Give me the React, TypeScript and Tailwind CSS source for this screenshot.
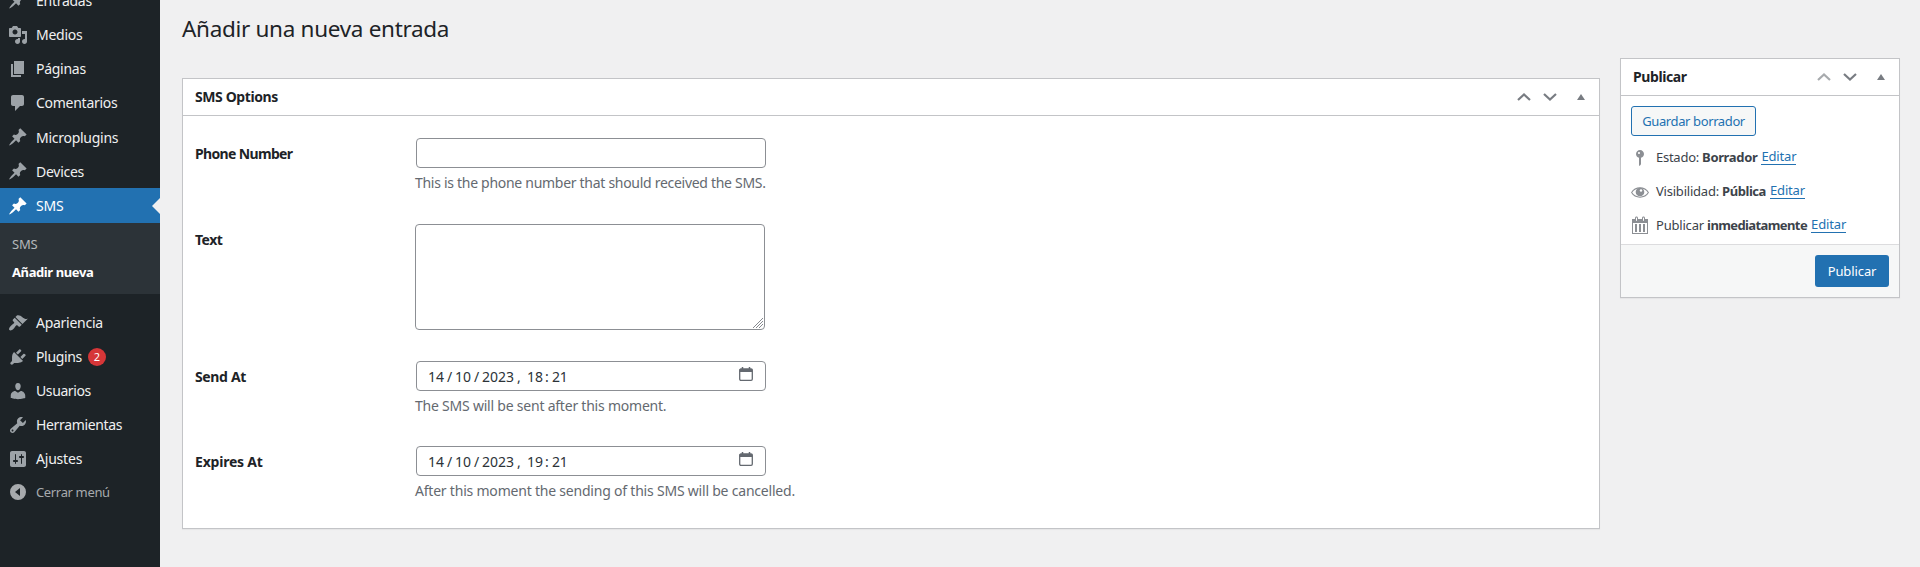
import type { ReactNode } from 'react';

const icons = {
  pin: 'M10.44 3.02l1.82-1.82 6.36 6.35-1.83 1.82c-1.05-.68-2.48-.57-3.41.36l-.75.75c-.92.93-1.04 2.35-.35 3.41l-1.83 1.82-2.41-2.41-2.8 2.79c-.42.42-3.38 2.71-3.8 2.29s1.86-3.39 2.28-3.81l2.79-2.79L4.1 9.36l1.83-1.82c1.05.69 2.48.57 3.4-.36l.75-.75c.93-.92 1.05-2.35.36-3.41z',
  media: 'M13 11V4c0-.55-.45-1-1-1h-1.67L9 1H5L3.67 3H2c-.55 0-1 .45-1 1v7c0 .55.45 1 1 1h10c.55 0 1-.45 1-1zM7 4.5c1.38 0 2.5 1.12 2.5 2.5S8.38 9.5 7 9.5 4.5 8.38 4.5 7 5.62 4.5 7 4.5zM14 6h5v10.5c0 1.38-1.12 2.5-2.5 2.5S14 17.88 14 16.5s1.12-2.5 2.5-2.5c.17 0 .34.02.5.05V9h-3V6zm-4 8.05V13h2v3.5c0 1.38-1.12 2.5-2.5 2.5S7 17.88 7 16.5 8.12 14 9.5 14c.17 0 .34.02.5.05z',
  page: 'M6 15V2h10v13H6zm-1 1h8v2H3V5h2v11z',
  comments: 'M5 2h9c1.1 0 2 .9 2 2v7c0 1.1-.9 2-2 2h-2l-5 5v-5H5c-1.1 0-2-.9-2-2V4c0-1.1.9-2 2-2z',
  appearance: 'M14.48 11.06L7.41 3.99l1.5-1.5c.5-.56 2.3-.47 3.51.32 1.21.8 1.43 1.28 2.91 2.1 1.18.64 2.45 1.26 4.45.85zm-.71.71L6.7 4.7 4.93 6.47c-.39.39-.39 1.02 0 1.41l1.06 1.06c.39.39.39 1.03 0 1.42-.6.6-1.43 1.11-2.21 1.69-.35.26-.7.53-1.01.84C1.43 14.23.4 16.08 1.4 17.07c.99 1 2.84-.03 4.18-1.36.31-.31.58-.66.85-1.02.57-.78 1.08-1.61 1.69-2.21.39-.39 1.02-.39 1.41 0l1.06 1.06c.39.39 1.02.39 1.41 0z',
  plugins: 'M13.11 4.36L9.87 7.6 8 5.73l3.24-3.24c.35-.34 1.05-.2 1.56.32.52.51.66 1.21.31 1.55zm-8 1.77l.91-1.12 9.01 9.01-1.19.84c-.71.71-2.63 1.16-3.82 1.16H6.14L4.9 17.26c-.59.59-1.54.59-2.12 0-.59-.58-.59-1.53 0-2.12l1.24-1.24v-3.88c0-1.13.4-3.19 1.09-3.89zm7.26 3.97l3.24-3.24c.34-.35 1.04-.21 1.55.31.52.51.66 1.21.31 1.55l-3.24 3.25z',
  users: 'M10 9.25c-2.27 0-2.73-3.44-2.73-3.44C7 4.02 7.82 2 9.97 2c2.16 0 2.98 2.02 2.71 3.81 0 0-.41 3.44-2.68 3.44zm0 2.57L12.72 10c2.39 0 4.52 2.33 4.52 4.53v2.49s-3.65 1.13-7.24 1.13c-3.65 0-7.24-1.13-7.24-1.13v-2.49c0-2.25 1.94-4.48 4.47-4.48z',
  tools: 'M16.68 9.77c-1.34 1.34-3.3 1.67-4.95.99l-5.41 6.52c-.99.99-2.59.99-3.58 0s-.99-2.59 0-3.57l6.52-5.42c-.68-1.65-.35-3.61.99-4.95 1.28-1.28 3.12-1.62 4.72-1.06l-2.89 2.89 2.82 2.82 2.86-2.87c.53 1.58.18 3.39-1.08 4.65zM3.81 16.21c.4.39 1.04.39 1.43 0 .4-.4.4-1.04 0-1.43-.39-.4-1.03-.4-1.43 0-.39.39-.39 1.03 0 1.43z',
  settings: 'M18 16V4c0-1.1-.9-2-2-2H4c-1.1 0-2 .9-2 2v12c0 1.1.9 2 2 2h12c1.1 0 2-.9 2-2zM8 11h1c.55 0 1 .45 1 1s-.45 1-1 1H8v1.5c0 .28-.22.5-.5.5s-.5-.22-.5-.5V13H6c-.55 0-1-.45-1-1s.45-1 1-1h1V5.5c0-.28.22-.5.5-.5s.5.22.5.5V11zm5-2h-1c-.55 0-1-.45-1-1s.45-1 1-1h1V5.5c0-.28.22-.5.5-.5s.5.22.5.5V7h1c.55 0 1 .45 1 1s-.45 1-1 1h-1v5.5c0 .28-.22.5-.5.5s-.5-.22-.5-.5V9z',
  collapse: 'M10 2a8 8 0 1 0 0 16 8 8 0 0 0 0-16zm2 4v8l-5-4z',
  postStatus: 'M14 6c0 1.86-1.28 3.41-3 3.86V16c0 1-2 2-2 2V9.86C7.28 9.41 6 7.86 6 6c0-2.21 1.79-4 4-4s4 1.79 4 4zM8 5c0 .55.45 1 1 1s1-.45 1-1-.45-1-1-1-1 .45-1 1z',
  calendar: 'M15 4h3v15H2V4h3V3c0-.83.67-1.5 1.5-1.5S8 2.17 8 3v1h4V3c0-.83.67-1.5 1.5-1.5S15 2.17 15 3v1zM6 3v2.5c0 .28.22.5.5.5s.5-.22.5-.5V3c0-.28-.22-.5-.5-.5S6 2.72 6 3zm7 0v2.5c0 .28.22.5.5.5s.5-.22.5-.5V3c0-.28-.22-.5-.5-.5s-.5.22-.5.5zM17 18V8H3v10h14zM7 9v8H5V9h2zm4 0v8H9V9h2zm4 0v8h-2V9h2z',
};

function Icon({ name, className = '' }: { name: keyof typeof icons; className?: string }) {
  return (
    <svg viewBox="0 0 20 20" fillRule="evenodd" className={`size-5 shrink-0 fill-current ${className}`}>
      <path d={icons[name]} />
    </svg>
  );
}

function MenuItem({ icon, label, height = 'h-[34.2px]', tracking = 'tracking-[-0.27px]', children }: {
  icon: keyof typeof icons; label: string; height?: string; tracking?: string; children?: ReactNode;
}) {
  return (
    <a className={`flex shrink-0 items-center pl-2 text-[14px] text-[#f0f0f1] ${height}`}>
      <Icon name={icon} className="mr-2 text-[#9ca2a7]" />
      <span className={tracking}>{label}</span>
      {children}
    </a>
  );
}

function Chevron({ up, className = '' }: { up?: boolean; className?: string }) {
  return (
    <svg viewBox="0 0 14 8" className={`h-2 w-3.5 ${className}`} fill="none" stroke="currentColor" strokeWidth="2.2">
      <path d={up ? 'M1 7l6-5.500 6 5.500' : 'M1 1l6 5.500 6-5.500'} />
    </svg>
  );
}

function BoxHeader({ title, tracking, first }: { title: string; tracking: string; first?: boolean }) {
  return (
    <header className="flex h-[37px] shrink-0 items-center border-b border-[#c3c4c7] pl-3 text-[#787c82]">
      <h2 className={`grow pb-0.5 text-[14px] font-bold text-[#1d2327] ${tracking}`}>{title}</h2>
      <Chevron up className={first ? 'text-[#a7aaad]' : ''} />
      <Chevron className="ml-3" />
      <svg viewBox="0 0 8 6" className="mr-3.5 mb-px ml-5 h-1.5 w-2 fill-current"><path d="M4 0l4 6H0z" /></svg>
    </header>
  );
}

function Row({ label, labelTracking, height, help, helpTracking = '', children }: {
  label: string; labelTracking: string; height: string; help?: string; helpTracking?: string; children: ReactNode;
}) {
  return (
    <div className={`flex ${height}`}>
      <label className={`w-[220px] pt-1.5 text-[14px] leading-[20px] font-bold text-[#1d2327] ${labelTracking}`}>{label}</label>
      <div>
        {children}
        {help && <p className={`mt-[5px] text-[14px] leading-[20px] whitespace-nowrap text-[#646970] ${helpTracking}`}>{help}</p>}
      </div>
    </div>
  );
}

function DateInput({ hour }: { hour: string }) {
  return (
    <div className="ml-px flex h-[30px] w-[350px] items-center rounded border border-[#8c8f94] bg-white pl-[11px] text-[14px] text-[#2c3338]">
      <span className="w-[19px]">14</span>
      <span className="w-2">/</span>
      <span className="w-[19px]">10</span>
      <span className="w-2">/</span>
      <span className="w-[35px]">2023</span>
      <span className="w-2.5">,</span>
      <span className="w-[18px]">{hour}</span>
      <span className="w-[7px]">:</span>
      <span className="tracking-[-0.3px]">21</span>
      <svg viewBox="0 0 14 14" className="mr-3 mb-1 ml-auto size-3.5 fill-none stroke-[#646970]">
        <rect x=".7" y="2" width="12.6" height="11.3" rx="1.2" strokeWidth="1.3" />
        <path d="M.7 3.500h12.600" strokeWidth="3" />
        <path d="M3.500 0v2M10.500 0v2" strokeWidth="1.500" />
      </svg>
    </div>
  );
}

function Edit() {
  return <a className="ml-1 border-b border-[#2271b1] tracking-[-0.15px] text-[#2271b1]">Editar</a>;
}

export default function App() {
  return (
    <div className="flex h-[567px] w-full overflow-hidden bg-[#f0f0f1] font-['Noto_Sans','Open_Sans',sans-serif]">
      <nav className="w-40 shrink-0 overflow-hidden bg-[#1d2327]">
        <div className="-mt-[16.7px] flex flex-col">
          <MenuItem icon="pin" label="Entradas" />
          <MenuItem icon="media" label="Medios" />
          <MenuItem icon="page" label="Páginas" />
          <MenuItem icon="comments" label="Comentarios" />
          <MenuItem icon="pin" label="Microplugins" />
          <MenuItem icon="pin" label="Devices" />
          <a className="flex h-[34.5px] items-center bg-[#2271b1] pl-2 text-[14px] tracking-[-0.25px] text-white">
            <Icon name="pin" className="mr-2" />
            SMS
            <svg viewBox="0 0 8 16" className="ml-auto h-4 w-2 fill-[#f0f0f1]"><path d="M8 0v16L0 8z" /></svg>
          </a>
        </div>
        <div className="mb-3 h-[71px] bg-[#2c3338] pt-[7px] pl-3 text-[13px] leading-7">
          <p className="tracking-[-0.2px] text-[#b5b8bb]">SMS</p>
          <p className="font-bold tracking-[-0.4px] text-white">Añadir nueva</p>
        </div>
        <MenuItem icon="appearance" label="Apariencia" height="h-[34px]" />
        <MenuItem icon="plugins" label="Plugins" height="h-[34px]" tracking="tracking-[-0.35px]">
          <span className="ml-1.5 flex size-[18px] items-center justify-center rounded-full bg-[#d63638] text-[11px] text-white">2</span>
        </MenuItem>
        <MenuItem icon="users" label="Usuarios" height="h-[34px]" tracking="tracking-[-0.4px]" />
        <MenuItem icon="tools" label="Herramientas" height="h-[34px]" tracking="tracking-[-0.35px]" />
        <MenuItem icon="settings" label="Ajustes" height="h-[34px]" tracking="tracking-[-0.2px]" />
        <a className="flex h-[33px] items-center pl-2 text-[13px] tracking-[-0.35px] text-[#a7aaad]">
          <Icon name="collapse" className="mr-2" />
          Cerrar menú
        </a>
      </nav>

      <main className="flex grow pr-5 pl-[22px]">
        <div className="grow">
          <h1 className="h-[78px] pt-[14px] text-[22.5px] leading-[30px] tracking-[-0.31px] text-[#1d2327]">Añadir una nueva entrada</h1>
          <section className="h-[451px] border border-[#c3c4c7] bg-white shadow-[0_1px_1px_rgba(0,0,0,0.04)]">
            <BoxHeader title="SMS Options" tracking="tracking-[-0.4px]" />
            <div className="px-3 pt-[22px]">
              <Row label="Phone Number" labelTracking="tracking-[-0.65px]" height="h-[86px]" help="This is the phone number that should received the SMS." helpTracking="tracking-[-0.29px]">
                <div className="ml-px h-[30px] w-[350px] rounded border border-[#8c8f94] bg-white" />
              </Row>
              <Row label="Text" labelTracking="tracking-[-0.5px]" height="h-[137px]">
                <div className="flex h-[106px] w-[350px] items-end justify-end rounded border border-[#8c8f94] bg-white p-px">
                  <svg viewBox="0 0 10 10" className="size-2.5" fill="none" stroke="#787c82" strokeWidth=".9">
                    <path d="M0 10L10 0M3 10l7-7M6 10l4-4" />
                  </svg>
                </div>
              </Row>
              <Row label="Send At" labelTracking="tracking-[-0.35px]" height="h-[85px]" help="The SMS will be sent after this moment." helpTracking="tracking-[-0.22px]">
                <DateInput hour="18" />
              </Row>
              <Row label="Expires At" labelTracking="tracking-[-0.2px]" height="h-[80px]" help="After this moment the sending of this SMS will be cancelled." helpTracking="tracking-[-0.21px]">
                <DateInput hour="19" />
              </Row>
            </div>
          </section>
        </div>

        <aside className="ml-5 w-[280px] shrink-0 pt-[58px]">
          <section className="flex h-[240px] flex-col border border-[#c3c4c7] bg-white shadow-[0_1px_1px_rgba(0,0,0,0.04)]">
            <BoxHeader title="Publicar" tracking="tracking-[-0.4px]" first />
            <div className="grow px-2.5 pt-2.5 text-[13px] text-[#3c434a]">
              <button className="mb-1 flex h-[30px] w-[125px] items-center justify-center rounded-[3px] border border-[#2271b1] bg-[#f6f7f7] pt-0.5 tracking-[-0.38px] whitespace-nowrap text-[#2271b1]">Guardar borrador</button>
              <p className="flex h-[34px] items-center leading-[15px]">
                <Icon name="postStatus" className="mt-px mr-1.5 -ml-px text-[#8c8f94]" />
                <span className="tracking-[-0.26px]">Estado: <b className="font-bold tracking-[-0.35px]">Borrador</b></span><Edit />
              </p>
              <p className="flex h-[34px] items-center leading-[15px]">
                <svg viewBox="0 0 20 20" className="mt-px mr-1.5 -ml-px size-5 shrink-0 fill-[#8c8f94]">
                  <path fillRule="evenodd" d="M1 10.500C4.500 3.500 15.500 3.500 19 10.500 15.500 17.400 4.500 17.400 1 10.500zm1.200 0C5.500 16 14.500 16 17.800 10.500 14.500 5 5.500 5 2.200 10.500z" />
                  <circle cx="10" cy="10" r="4.3" />
                  <circle cx="11" cy="8.5" r="1.2" fill="#fff" />
                </svg>
                <span className="tracking-[-0.22px]">Visibilidad: <b className="font-bold tracking-[-0.45px]">Pública</b></span><Edit />
              </p>
              <p className="flex h-[34px] items-center leading-[15px]">
                <Icon name="calendar" className="mr-1.5 -ml-px text-[#8c8f94]" />
                <span className="tracking-[-0.2px]">Publicar <b className="font-bold tracking-[-0.6px]">inmediatamente</b></span><Edit />
              </p>
            </div>
            <footer className="flex h-[53px] shrink-0 items-center justify-end border-t border-[#dcdcde] bg-[#f6f7f7] pr-2.5">
              <button className="h-8 w-[74px] rounded-[3px] bg-[#2271b1] pt-px text-[13px] tracking-[-0.1px] text-white">Publicar</button>
            </footer>
          </section>
        </aside>
      </main>
    </div>
  );
}
